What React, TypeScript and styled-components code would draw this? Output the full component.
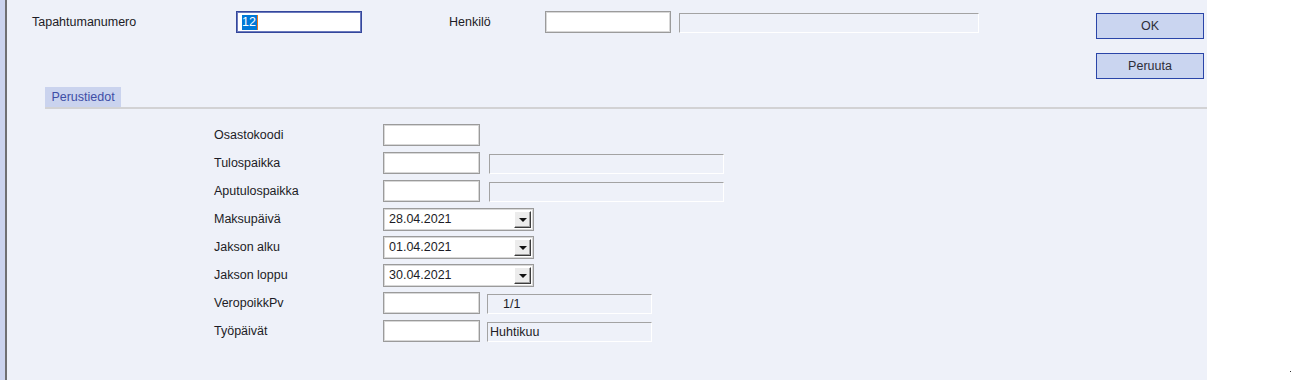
import styled, { createGlobalStyle } from "styled-components";

const GlobalStyle = createGlobalStyle`
  html, body {
    margin: 0;
    padding: 0;
    background: #fff;
  }
  body {
    font-family: "Liberation Sans", Arial, sans-serif;
    font-size: 12.5px;
    color: #1c1c26;
  }
`;

const Page = styled.div`
  position: relative;
  display: flex;
  height: 380px;
  background: #fff;
`;

const Frame = styled.div`
  width: 1202px;
  display: flex;
  border-left: 5px solid #cbd3ee;
`;

const Panel = styled.div`
  flex: 1;
  display: flex;
  flex-direction: column;
  background: #eef1f9;
  border-left: 2px solid #6f6f72;
`;

const TopArea = styled.div`
  display: flex;
  justify-content: space-between;
`;

const HeaderRow = styled.div`
  display: flex;
  align-items: center;
  height: 22px;
  margin-top: 11px;
  padding-left: 25px;
`;

const Label = styled.span<{ $width: number }>`
  width: ${(p) => p.$width}px;
  flex-shrink: 0;
  white-space: nowrap;
`;

const TextInput = styled.div<{ $width?: number }>`
  box-sizing: border-box;
  width: ${(p) => p.$width ?? 97}px;
  height: 22px;
  flex-shrink: 0;
  background: #fff;
  border: 1px solid #9b9b9b;
  box-shadow: inset 0 0 0 1px #d8d8d8;
`;

const FocusedInput = styled(TextInput)`
  display: flex;
  align-items: center;
  padding-left: 5px;
  border: 1px solid #34479c;
  box-shadow: inset 0 0 0 1px #6a79bd;
`;

const Selection = styled.span`
  background: #0078d7;
  color: #fff;
  line-height: 15px;
  padding: 0 1px 0 0;
  border-right: 1px solid #e8731e;
`;

const InfoField = styled.div<{ $width: number; $gap: number; $indent?: number }>`
  box-sizing: border-box;
  width: ${(p) => p.$width}px;
  height: 20px;
  margin-left: ${(p) => p.$gap}px;
  align-self: flex-end;
  display: flex;
  align-items: center;
  padding-left: ${(p) => p.$indent ?? 2}px;
  border-top: 1px solid #a3a3a3;
  border-left: 1px solid #a3a3a3;
  border-right: 1px solid #fff;
  border-bottom: 1px solid #fff;
  white-space: pre;
`;

const ButtonColumn = styled.div`
  display: flex;
  flex-direction: column;
  gap: 14px;
  padding-top: 13px;
  margin-right: 3px;
`;

const ActionButton = styled.button`
  box-sizing: border-box;
  width: 108px;
  height: 26px;
  background: #cad5f0;
  border: 1px solid #2a45a8;
  color: #2e2e3a;
  font-family: inherit;
  font-size: 12.5px;
  padding: 0;
`;

const TabBar = styled.div`
  display: flex;
  margin-top: 8px;
  margin-left: 38px;
  border-bottom: 2px solid #d2d2d4;
`;

const Tab = styled.div`
  height: 20px;
  width: 76px;
  display: flex;
  align-items: center;
  justify-content: center;
  background: #cad3ee;
  color: #3e4ea6;
`;

const Form = styled.div`
  display: flex;
  flex-direction: column;
  gap: 6px;
  margin-top: 15px;
  padding-left: 207px;
`;

const FormRow = styled.div`
  display: flex;
  align-items: center;
  height: 22px;
`;

const DateBox = styled.div`
  box-sizing: border-box;
  width: 151px;
  height: 23px;
  display: flex;
  align-items: center;
  justify-content: space-between;
  padding: 0 2px 0 5px;
  background: #fff;
  border: 1px solid #9b9b9b;
  box-shadow: inset 0 0 0 1px #d8d8d8;
`;

const DropButton = styled.div`
  box-sizing: border-box;
  width: 17px;
  height: 17px;
  display: flex;
  align-items: center;
  justify-content: center;
  background: #ececec;
  border-top: 1px solid #fff;
  border-left: 1px solid #fff;
  border-right: 1px solid #3c3c3c;
  border-bottom: 1px solid #3c3c3c;
  box-shadow: inset -1px -1px 0 #a0a0a0;
`;

const Arrow = styled.span`
  width: 0;
  height: 0;
  margin-top: 2px;
  border-left: 4px solid transparent;
  border-right: 4px solid transparent;
  border-top: 4px solid #111;
`;

const Dot = styled.span`
  position: absolute;
  right: 1px;
  bottom: 8px;
  width: 1px;
  height: 1px;
  background: #333;
`;

type Row =
  | { label: string; kind: "input"; info?: { width: number; gap: number; text?: string; indent?: number } }
  | { label: string; kind: "date"; value: string };

const rows: Row[] = [
  { label: "Osastokoodi", kind: "input" },
  { label: "Tulospaikka", kind: "input", info: { width: 235, gap: 9 } },
  { label: "Aputulospaikka", kind: "input", info: { width: 235, gap: 9 } },
  { label: "Maksupäivä", kind: "date", value: "28.04.2021" },
  { label: "Jakson alku", kind: "date", value: "01.04.2021" },
  { label: "Jakson loppu", kind: "date", value: "30.04.2021" },
  { label: "VeropoikkPv", kind: "input", info: { width: 165, gap: 7, text: "1/1", indent: 15 } },
  { label: "Työpäivät", kind: "input", info: { width: 165, gap: 7, text: "Huhtikuu", indent: 2 } },
];

const App = () => {
  return (
    <>
      <GlobalStyle />
      <Page>
        <Frame>
          <Panel>
            <TopArea>
              <HeaderRow>
                <Label $width={204}>Tapahtumanumero</Label>
                <FocusedInput $width={126}>
                  <Selection>12</Selection>
                </FocusedInput>
                <Label $width={96} style={{ marginLeft: 87 }}>Henkilö</Label>
                <TextInput $width={126} />
                <InfoField $width={300} $gap={8} />
              </HeaderRow>
              <ButtonColumn>
                <ActionButton>OK</ActionButton>
                <ActionButton>Peruuta</ActionButton>
              </ButtonColumn>
            </TopArea>
            <TabBar>
              <Tab>Perustiedot</Tab>
            </TabBar>
            <Form>
              {rows.map((row) => (
                <FormRow key={row.label}>
                  <Label $width={169}>{row.label}</Label>
                  {row.kind === "date" ? (
                    <DateBox>
                      <span>{row.value}</span>
                      <DropButton>
                        <Arrow />
                      </DropButton>
                    </DateBox>
                  ) : (
                    <>
                      <TextInput />
                      {row.info && (
                        <InfoField $width={row.info.width} $gap={row.info.gap} $indent={row.info.indent}>
                          {row.info.text}
                        </InfoField>
                      )}
                    </>
                  )}
                </FormRow>
              ))}
            </Form>
          </Panel>
        </Frame>
        <Dot />
      </Page>
    </>
  );
};

export default App;
